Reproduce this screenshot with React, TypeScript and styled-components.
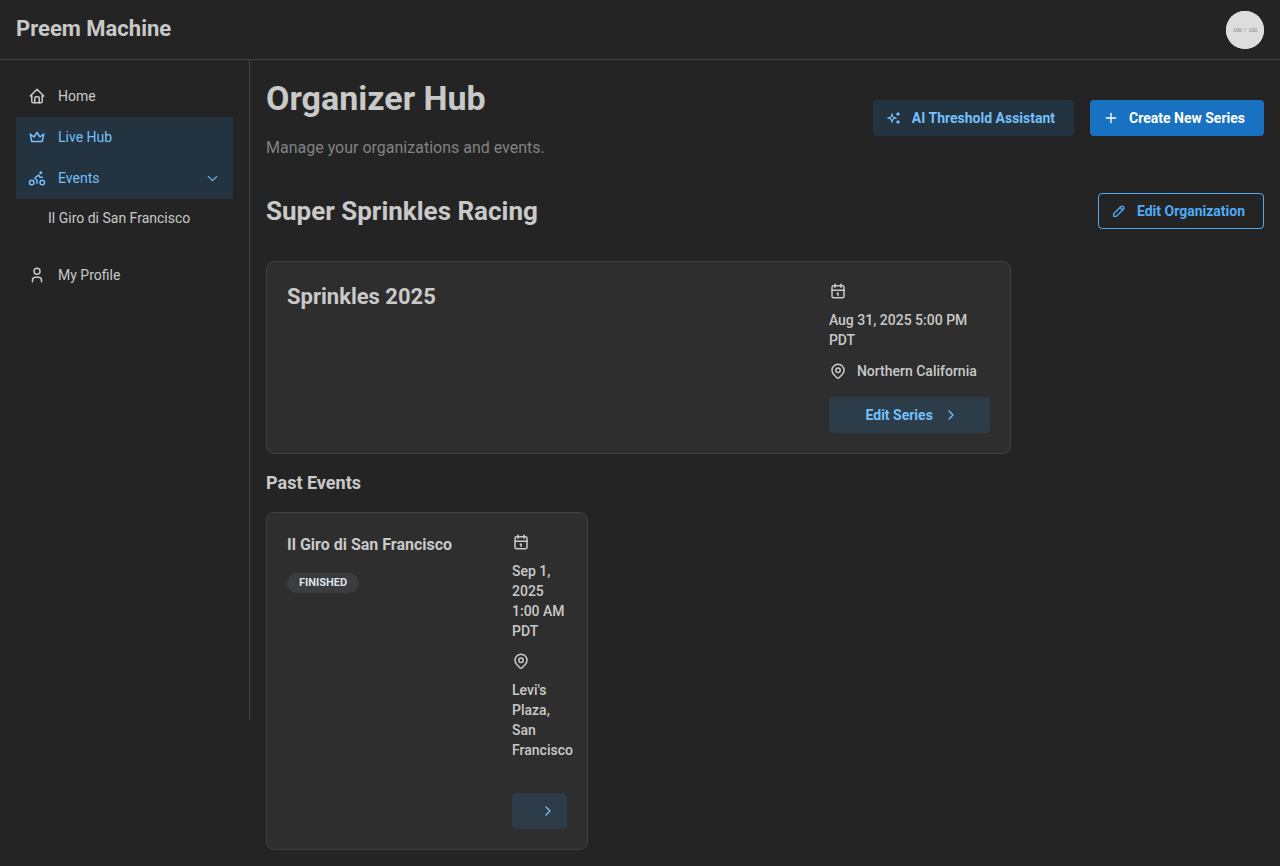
import React from 'react';
import styled, { createGlobalStyle, css } from 'styled-components';
import {
  TbBike,
  TbCalendar,
  TbChevronDown,
  TbChevronRight,
  TbCrown,
  TbHome,
  TbMapPin,
  TbPencil,
  TbPlus,
  TbSparkles,
  TbUser,
} from 'react-icons/tb';

const color = {
  body: '#242424',
  card: '#2e2e2e',
  border: '#424242',
  text: '#c9c9c9',
  dimmed: '#828282',
  blueText: '#74c0fc',
  blueLight: 'rgba(34, 139, 230, 0.15)',
  blueOutline: '#4dabf7',
  blueFilled: '#1971c2',
};

const GlobalStyle = createGlobalStyle`
  *, *::before, *::after { box-sizing: border-box; }
  body {
    margin: 0;
    background: ${color.body};
    color: ${color.text};
    font-family: Roboto, "Liberation Sans", sans-serif;
    font-size: 16px;
    line-height: 24px;
    -webkit-font-smoothing: antialiased;
  }
  h1, h2, h3, h4, p, ul { margin: 0; padding: 0; }
  h1, h2, h3, h4 { font-weight: 700; }
  ul { list-style: none; }
  svg { display: block; flex-shrink: 0; }
`;

const Header = styled.header`
  display: flex;
  align-items: flex-start;
  justify-content: space-between;
  height: 60px;
  padding: 11px 16px 0;
  border-bottom: 1px solid ${color.border};
`;

const Brand = styled.a`
  color: inherit;
  font-size: 22px;
  font-weight: 700;
  line-height: 36px;
  text-decoration: none;
`;

const AvatarButton = styled.button`
  width: 38px;
  height: 38px;
  padding: 0;
  border: 0;
  border-radius: 50%;
  overflow: hidden;
  background: #dddddd;
  cursor: pointer;
`;

const Body = styled.div`
  display: flex;
  align-items: flex-start;
`;

const Sidebar = styled.nav`
  flex: 0 0 250px;
  min-height: 660px;
  padding: 16px;
  border-right: 1px solid ${color.border};
`;

const NavGroup = styled.ul`
  & + & { margin-top: 16px; }
`;

const NavLink = styled.a<{ $active?: boolean }>`
  display: flex;
  align-items: center;
  gap: 12px;
  padding: 8px 12px 9px;
  font-size: 14px;
  line-height: 24px;
  text-decoration: none;
  color: ${(p) => (p.$active ? color.blueText : color.text)};
  background: ${(p) => (p.$active ? color.blueLight : 'transparent')};
`;

const NavLabel = styled.span`
  flex: 1;
`;

const SubNavLink = styled(NavLink)`
  padding: 7px 12px 9px 32px;
`;

const Main = styled.main`
  flex: 1;
  min-width: 0;
  padding: 16px;
`;

const SplitRow = styled.div`
  display: flex;
  align-items: center;
  justify-content: space-between;
  gap: 16px;
`;

const PageHeader = styled(SplitRow)`
  margin-bottom: 33px;
`;

const OrgHeader = styled(SplitRow)`
  margin-bottom: 32px;
`;

const ButtonGroup = styled.div`
  display: flex;
  gap: 16px;
`;

const PageTitle = styled.h1`
  font-size: 34px;
  line-height: 44px;
  margin-bottom: 16px;
`;

const Subtitle = styled.p`
  color: ${color.dimmed};
`;

const OrgTitle = styled.h2`
  font-size: 26px;
  line-height: 34px;
`;

const SeriesTitle = styled.h3`
  font-size: 22px;
  line-height: 30px;
`;

const SectionTitle = styled.h4`
  margin: 16px 0;
  font-size: 18px;
  line-height: 26px;
`;

const EventTitle = styled.h4`
  font-size: 16px;
  line-height: 24px;
  margin-bottom: 16px;
`;

const variants = {
  light: css`
    background: ${color.blueLight};
    color: ${color.blueText};
  `,
  filled: css`
    background: ${color.blueFilled};
    color: #ffffff;
  `,
  outline: css`
    background: transparent;
    border-color: ${color.blueOutline};
    color: ${color.blueOutline};
  `,
};

const Button = styled.button<{
  $variant: keyof typeof variants;
  $iconSide?: 'left' | 'right';
  $full?: boolean;
}>`
  display: flex;
  align-items: center;
  justify-content: center;
  gap: 10px;
  width: ${(p) => (p.$full ? '100%' : 'auto')};
  height: 36px;
  padding: ${(p) => (p.$iconSide === 'right' ? '0 12px 0 18px' : '0 18px 0 12px')};
  border: 1px solid transparent;
  border-radius: 4px;
  font-family: inherit;
  font-size: 14px;
  font-weight: 700;
  line-height: 20px;
  white-space: nowrap;
  cursor: pointer;
  ${(p) => variants[p.$variant]}
`;

const ButtonLabel = styled.span`
  min-width: 0;
  overflow: hidden;
`;

const CardGrid = styled.div<{ $columns: number }>`
  display: grid;
  grid-template-columns: repeat(${(p) => p.$columns}, minmax(0, 1fr));
  gap: 16px;
`;

const Card = styled.article<{ $span?: number }>`
  grid-column: span ${(p) => p.$span ?? 1};
  display: grid;
  grid-template-columns: repeat(4, minmax(0, 1fr));
  gap: 20px;
  padding: 20px;
  border: 1px solid ${color.border};
  border-radius: 8px;
  background: ${color.card};
`;

const CardHeading = styled.div`
  grid-column: span 3;
`;

const CardInfo = styled.div`
  display: flex;
  flex-direction: column;
  gap: 11px;
`;

const InfoItem = styled.div`
  display: flex;
  flex-wrap: wrap;
  align-items: center;
  gap: 10px;
  font-size: 14px;
  font-weight: 500;
  line-height: 20px;
`;

const CardAction = styled.div<{ $space: number }>`
  padding-top: ${(p) => p.$space}px;
`;

const Badge = styled.span`
  display: inline-block;
  height: 20px;
  padding: 0 12px;
  border-radius: 10px;
  background: #3b3c3e;
  color: #dee2e6;
  font-size: 11px;
  font-weight: 700;
  line-height: 20px;
  vertical-align: top;
  text-transform: uppercase;
`;

export default function App() {
  return (
    <>
      <GlobalStyle />
      <Header>
        <Brand href="#">Preem Machine</Brand>
        <AvatarButton type="button" aria-label="Account">
          <svg width="38" height="38" viewBox="0 0 38 38" aria-hidden="true">
            <rect width="38" height="38" fill="#dddddd" />
            <text
              x="19"
              y="21"
              textAnchor="middle"
              fontFamily="Liberation Serif, serif"
              fontSize="6"
              fill="#808080"
            >
              100 × 100
            </text>
          </svg>
        </AvatarButton>
      </Header>
      <Body>
        <Sidebar aria-label="Main">
          <NavGroup>
            <li>
              <NavLink href="#home">
                <TbHome size={18} />
                <NavLabel>Home</NavLabel>
              </NavLink>
            </li>
            <li>
              <NavLink href="#live" $active>
                <TbCrown size={18} />
                <NavLabel>Live Hub</NavLabel>
              </NavLink>
            </li>
            <li>
              <NavLink href="#events" $active>
                <TbBike size={18} />
                <NavLabel>Events</NavLabel>
                <TbChevronDown size={17} strokeWidth={1.5} />
              </NavLink>
              <SubNavLink href="#giro">Il Giro di San Francisco</SubNavLink>
            </li>
          </NavGroup>
          <NavGroup>
            <li>
              <NavLink href="#profile">
                <TbUser size={18} />
                <NavLabel>My Profile</NavLabel>
              </NavLink>
            </li>
          </NavGroup>
        </Sidebar>
        <Main>
          <PageHeader>
            <div>
              <PageTitle>Organizer Hub</PageTitle>
              <Subtitle>Manage your organizations and events.</Subtitle>
            </div>
            <ButtonGroup>
              <Button type="button" $variant="light">
                <TbSparkles size={16} />
                <ButtonLabel>AI Threshold Assistant</ButtonLabel>
              </Button>
              <Button type="button" $variant="filled">
                <TbPlus size={16} />
                <ButtonLabel>Create New Series</ButtonLabel>
              </Button>
            </ButtonGroup>
          </PageHeader>
          <OrgHeader>
            <OrgTitle>Super Sprinkles Racing</OrgTitle>
            <Button type="button" $variant="outline">
              <TbPencil size={16} />
              <ButtonLabel>Edit Organization</ButtonLabel>
            </Button>
          </OrgHeader>
          <CardGrid $columns={4}>
            <Card $span={3}>
              <CardHeading>
                <SeriesTitle>Sprinkles 2025</SeriesTitle>
              </CardHeading>
              <CardInfo>
                <InfoItem>
                  <TbCalendar size={18} />
                  <span>Aug 31, 2025 5:00 PM PDT</span>
                </InfoItem>
                <InfoItem>
                  <TbMapPin size={18} />
                  <span>Northern California</span>
                </InfoItem>
                <CardAction $space={5}>
                  <Button type="button" $variant="light" $iconSide="right" $full>
                    <ButtonLabel>Edit Series</ButtonLabel>
                    <TbChevronRight size={16} />
                  </Button>
                </CardAction>
              </CardInfo>
            </Card>
          </CardGrid>
          <SectionTitle>Past Events</SectionTitle>
          <CardGrid $columns={3}>
            <Card>
              <CardHeading>
                <EventTitle>Il Giro di San Francisco</EventTitle>
                <Badge>Finished</Badge>
              </CardHeading>
              <CardInfo>
                <InfoItem>
                  <TbCalendar size={18} />
                  <span>Sep 1, 2025 1:00 AM PDT</span>
                </InfoItem>
                <InfoItem>
                  <TbMapPin size={18} />
                  <span>Levi's Plaza, San Francisco</span>
                </InfoItem>
                <CardAction $space={22}>
                  <Button
                    type="button"
                    $variant="light"
                    $iconSide="right"
                    $full
                    aria-label="Open event"
                  >
                    <ButtonLabel />
                    <TbChevronRight size={16} />
                  </Button>
                </CardAction>
              </CardInfo>
            </Card>
          </CardGrid>
        </Main>
      </Body>
    </>
  );
}
